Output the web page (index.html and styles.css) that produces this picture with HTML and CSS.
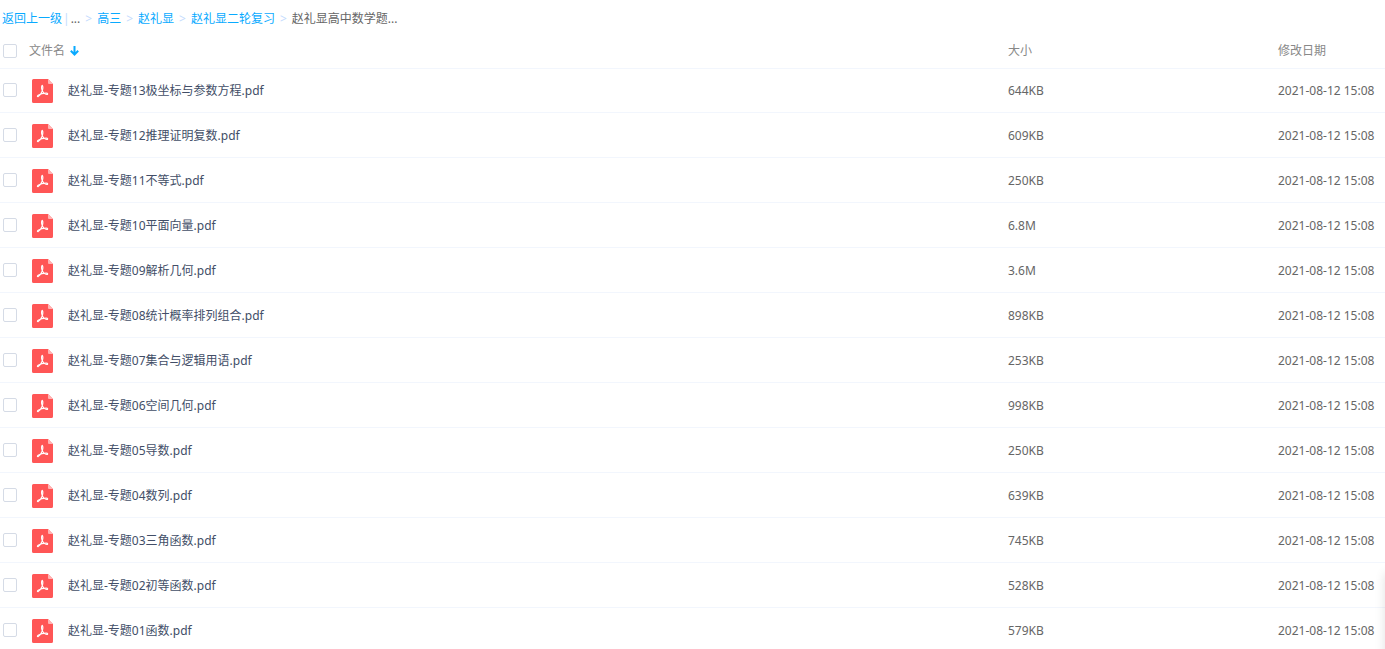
FILE: index.html
```html
<!DOCTYPE html>
<html lang="zh-CN">
<head>
  <meta charset="UTF-8" />
  <title>赵礼显高中数学题</title>
  <meta name="viewport" content="width=device-width, initial-scale=1.0">
  <link rel="stylesheet" href="styles.css">
</head>
<body>
  <svg class="sprite" aria-hidden="true">
    <symbol id="pdf" viewBox="0 0 21 24">
      <path fill="#ff5656" d="M1.500 0H16l5 5v17.500a1.500 1.500 0 0 1-1.500 1.500h-18A1.500 1.500 0 0 1 0 22.500v-21A1.500 1.500 0 0 1 1.500 0z" />
      <path fill="#ffb4b4" d="M16 0l5 5h-4a1 1 0 0 1-1-1z" />
      <path fill="none" stroke="#fff" stroke-width="1.100" stroke-linecap="round" stroke-linejoin="round" d="M10.300 6.400c1 1.600.6 4-.4 6.300-1 2.200-2.500 4.300-3.700 4.900-1 .3-1.100-.8 0-1.500 2-1.200 5-2 8.100-2 1.500 0 1.900 1.400.6 1.400-2 0-4.700-2.500-5.200-5.600-.3-1.800-.1-3.500.6-3.500z" />
    </symbol>
  </svg>

  <nav class="crumbs">
    <a href="#">返回上一级</a>
    <span class="bar">|</span>
    <span class="dots">...</span>
    <span class="sep">&gt;</span>
    <a href="#">高三</a>
    <span class="sep">&gt;</span>
    <a href="#">赵礼显</a>
    <span class="sep">&gt;</span>
    <a href="#">赵礼显二轮复习</a>
    <span class="sep">&gt;</span>
    <span>赵礼显高中数学题...</span>
  </nav>

  <table class="files">
    <thead>
      <tr>
        <th class="check"><input type="checkbox" id="all" aria-label="全选"></th>
        <th class="name">
          <span class="sort">文件名
            <svg width="9" height="10" viewBox="0 0 9 10" aria-hidden="true"><path fill="none" stroke="#09aaff" stroke-width="2" d="M4.500 0v8M.8 4.800l3.700 3.700 3.700-3.700" /></svg>
          </span>
        </th>
        <th class="size">大小</th>
        <th class="date">修改日期</th>
      </tr>
    </thead>
    <tbody id="list"></tbody>
  </table>

  <div class="side-panel"></div>

  <script>
    const files = [
      ["赵礼显-专题13极坐标与参数方程.pdf", "644KB"],
      ["赵礼显-专题12推理证明复数.pdf", "609KB"],
      ["赵礼显-专题11不等式.pdf", "250KB"],
      ["赵礼显-专题10平面向量.pdf", "6.8M"],
      ["赵礼显-专题09解析几何.pdf", "3.6M"],
      ["赵礼显-专题08统计概率排列组合.pdf", "898KB"],
      ["赵礼显-专题07集合与逻辑用语.pdf", "253KB"],
      ["赵礼显-专题06空间几何.pdf", "998KB"],
      ["赵礼显-专题05导数.pdf", "250KB"],
      ["赵礼显-专题04数列.pdf", "639KB"],
      ["赵礼显-专题03三角函数.pdf", "745KB"],
      ["赵礼显-专题02初等函数.pdf", "528KB"],
      ["赵礼显-专题01函数.pdf", "579KB"]
    ];

    document.getElementById("list").innerHTML = files.map(([name, size], i) => `
      <tr>
        <td class="check"><input type="checkbox" id="f${i}" aria-labelledby="n${i}"></td>
        <td class="name">
          <div class="file">
            <svg class="icon" aria-hidden="true"><use href="#pdf" /></svg>
            <a href="#" id="n${i}">${name}</a>
          </div>
        </td>
        <td class="size">${size}</td>
        <td class="date">2021-08-12 15:08</td>
      </tr>`).join("");

    const all = document.getElementById("all");
    all.addEventListener("change", () => {
      document.querySelectorAll("#list input").forEach(box => {
        box.checked = all.checked;
      });
    });
  </script>
</body>
</html>
```
FILE: styles.css
```css
* {
  box-sizing: border-box;
  margin: 0;
  padding: 0;
}

body {
  font-family: "Noto Sans", "Noto Sans CJK SC", sans-serif;
  font-size: 12px;
  line-height: 18px;
  color: #666;
  background: #fff;
  overflow: hidden;
}

a {
  color: #09aaff;
  text-decoration: none;
}

a:hover {
  text-decoration: underline;
}

.sprite {
  display: none;
}

.crumbs {
  display: flex;
  height: 32px;
  padding: 10px 2px 0;
  white-space: nowrap;
}

.bar {
  color: #c4dbfe;
  margin: 0 1px;
}

.sep {
  color: #c4dbfe;
  margin: 0 5px;
}

.files {
  width: 100%;
  table-layout: fixed;
  border-spacing: 0;
}

.files th {
  height: 36px;
  padding-top: 2px;
  font-weight: normal;
  text-align: left;
  color: #888;
}

.files td {
  height: 45px;
  padding-top: 2px;
  border-bottom: 1px solid #f2f6fd;
  white-space: nowrap;
}

.files tbody tr:first-child td {
  padding-top: 0;
  border-top: 1px solid #f2f6fd;
}

.files tbody tr:hover {
  background: #f4fbff;
}

.files .check {
  width: 29px;
  padding-left: 3px;
}

.files td.check {
  padding-top: 0;
}

.files tbody tr:first-child .check {
  padding-bottom: 2px;
}

.files .size {
  width: 270px;
}

.files .date {
  width: 107px;
}

input[type="checkbox"] {
  appearance: none;
  display: block;
  width: 14px;
  height: 14px;
  border: 1px solid #d5dbe6;
  border-radius: 2px;
  background: #fff;
}

input[type="checkbox"]:checked {
  background: #09aaff;
  border-color: #09aaff;
}

.sort {
  display: flex;
  align-items: center;
  gap: 5px;
}

.file {
  display: flex;
  align-items: center;
  gap: 15px;
  padding-left: 3px;
}

.file a {
  color: #424e67;
}

.icon {
  width: 21px;
  height: 24px;
}

/* collapsed panel, only its shadow shows at the window edge */
.side-panel {
  position: fixed;
  right: -60px;
  bottom: -20px;
  width: 60px;
  height: 96px;
  box-shadow: 0 0 10px rgba(0, 0, 0, 0.12);
}
```
